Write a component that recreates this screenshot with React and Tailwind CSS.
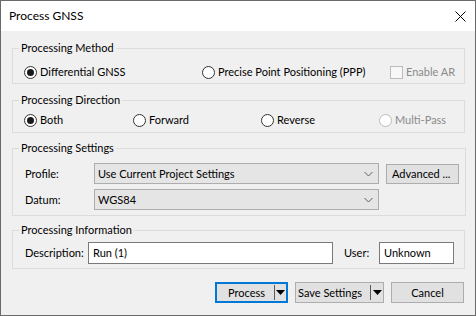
import React from "react";

const Radio = ({ checked, disabled, label, className = "" }) => (
  <label className={`flex items-center whitespace-nowrap ${className}`}>
    <span
      className={`w-[13px] h-[13px] rounded-full border flex items-center justify-center bg-white shrink-0 ${
        disabled ? "border-[#bcbcbc]" : "border-[#333333]"
      }`}
    >
      {checked && <span className="w-[7px] h-[7px] rounded-full bg-[#1a1a1a]" />}
    </span>
    <span className={`ml-[3px] ${disabled ? "text-[#8a8a8a]" : "text-black"}`}>{label}</span>
  </label>
);

const Chevron = () => (
  <svg width="9" height="6" viewBox="0 0 9 6" className="mr-[5px]">
    <path d="M0.5 1 L4.5 5 L8.5 1" fill="none" stroke="#606060" strokeWidth="1" />
  </svg>
);

const Combo = ({ value }) => (
  <div className="w-[285px] h-[21px] bg-[#e5e5e5] border border-[#adadad] flex items-center justify-between pl-[3px]">
    <span>{value}</span>
    <Chevron />
  </div>
);

const Caret = () => (
  <svg width="9" height="5" viewBox="0 0 9 5">
    <path d="M0 0 L9 0 L4.5 5 Z" fill="#000" />
  </svg>
);

const Group = ({ title, className = "", children }) => (
  <fieldset className={`w-[453px] ml-[11px] border border-[#dcdcdc] px-[6px] ${className}`}>
    <legend className="px-[2px] leading-[16px]">{title}</legend>
    {children}
  </fieldset>
);

export default function App() {
  return (
    <div className="w-[476px] h-[316px] bg-[#f0f0f0] border border-[#6a6a6a] flex flex-col font-['Lato',sans-serif] text-[11px] text-black leading-[16px] overflow-hidden">
      {/* Title bar */}
      <div className="h-[30px] bg-white flex items-center justify-between pl-[8px] pr-[9px] shrink-0">
        <span className="text-[12px]">Process GNSS</span>
        <svg width="11" height="11" viewBox="0 0 11 11">
          <path d="M0.5 0.5 L10.5 10.5 M10.5 0.5 L0.5 10.5" stroke="#000" strokeWidth="1" />
        </svg>
      </div>

      <Group title="Processing Method" className="mt-[9px] pt-[8px] pb-[3px]">
        <div className="flex items-center h-[16px] pl-[5px]">
          <Radio checked label="Differential GNSS" className="w-[178px]" />
          <Radio label="Precise Point Positioning (PPP)" className="w-[188px]" />
          <label className="flex items-center whitespace-nowrap">
            <span className="w-[13px] h-[13px] border border-[#bcbcbc] bg-[#f7f7f7]" />
            <span className="ml-[3px] text-[#8a8a8a]">Enable AR</span>
          </label>
        </div>
      </Group>

      <Group title="Processing Direction" className="mt-[8px] pt-[4px] pb-[4px]">
        <div className="flex items-center h-[16px] pl-[5px]">
          <Radio checked label="Both" className="w-[109px]" />
          <Radio label="Forward" className="w-[128px]" />
          <Radio label="Reverse" className="w-[118px]" />
          <Radio disabled label="Multi-Pass" />
        </div>
      </Group>

      <Group title="Processing Settings" className="mt-[7px] pt-[7px] pb-[5px]">
        <div className="flex items-start pl-[6px]">
          <span className="w-[69px] h-[21px] flex items-center">Profile:</span>
          <Combo value="Use Current Project Settings" />
          <button className="ml-[7px] mt-[1px] w-[73px] h-[20px] bg-[#e1e1e1] border border-[#adadad] flex items-center pl-[5px] whitespace-nowrap">
            Advanced ...
          </button>
        </div>
        <div className="flex items-start pl-[6px] mt-[5px]">
          <span className="w-[69px] h-[21px] flex items-center">Datum:</span>
          <Combo value="WGS84" />
        </div>
      </Group>

      <Group title="Processing Information" className="mt-[6px] pt-[4px] pb-[4px]">
        <div className="flex items-center pl-[6px] h-[22px]">
          <span className="w-[63px] whitespace-nowrap">Description:</span>
          <div className="w-[245px] h-[22px] bg-white border border-[#7a7a7a] flex items-center pl-[4px]">Run (1)</div>
          <span className="ml-[11px] w-[35px]">User:</span>
          <div className="w-[75px] h-[22px] bg-white border border-[#7a7a7a] flex items-center pl-[4px]">Unknown</div>
        </div>
      </Group>

      <div className="w-[453px] ml-[11px] mt-[13px] pr-[1px] flex justify-end gap-[7px]">
        <button className="w-[73px] h-[21px] bg-[#e1e1e1] border-2 border-[#0078d7] flex items-center">
          <span className="flex-1 text-center pl-[2px]">Process</span>
          <span className="w-[1px] h-[15px] bg-[#5a5a5a]" />
          <span className="w-[11px] flex justify-center">
            <Caret />
          </span>
        </button>
        <button className="w-[89px] h-[21px] bg-[#e1e1e1] border border-[#adadad] flex items-center">
          <span className="flex-1 text-left pl-[2px] whitespace-nowrap">Save Settings</span>
          <span className="w-[1px] h-[15px] bg-[#5a5a5a]" />
          <span className="w-[12px] flex justify-center">
            <Caret />
          </span>
        </button>
        <button className="w-[73px] h-[21px] bg-[#e1e1e1] border border-[#adadad] flex items-center justify-center">
          Cancel
        </button>
      </div>
    </div>
  );
}
